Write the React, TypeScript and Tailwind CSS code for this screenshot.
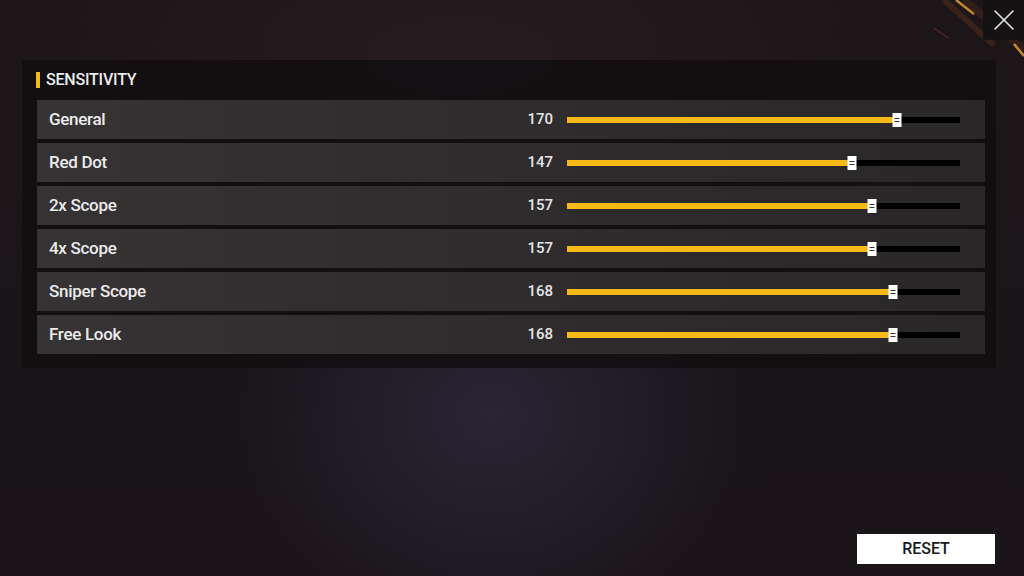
import React from "react";

type Row = { label: string; value: number };

const rows: Row[] = [
  { label: "General", value: 170 },
  { label: "Red Dot", value: 147 },
  { label: "2x Scope", value: 157 },
  { label: "4x Scope", value: 157 },
  { label: "Sniper Scope", value: 168 },
  { label: "Free Look", value: 168 },
];

const font = {
  fontFamily: '"Roboto", "Noto Sans", sans-serif',
};

const TRACK_W = 393;

function Slider({ value }: { value: number }) {
  // thumb position in px along the track
  const pos = value * 1.96 - 3;
  return (
    <div className="relative h-[6px] w-[393px] bg-black">
      <div
        className="absolute left-0 top-0 h-full bg-[#f6b915]"
        style={{ width: `${(pos / TRACK_W) * 100}%` }}
      />
      <div
        className="absolute top-1/2 flex h-[14px] w-[9px] -translate-x-1/2 -translate-y-1/2 flex-col items-center justify-center gap-[2px] bg-white"
        style={{ left: `${pos}px` }}
      >
        <span className="h-px w-[5px] bg-[#333]" />
        <span className="h-px w-[5px] bg-[#333]" />
      </div>
    </div>
  );
}

function CloseButton() {
  return (
    <div className="absolute right-0 top-0 flex h-[40px] w-[41px] items-center justify-center bg-[#141113]/90">
      <svg width="22" height="22" viewBox="0 0 22 22">
        <path d="M2 2 L20 20 M20 2 L2 20" stroke="#e8e8ea" strokeWidth="1.6" strokeLinecap="round" />
      </svg>
    </div>
  );
}

function Streaks() {
  return (
    <svg className="pointer-events-none absolute right-0 top-0" width="90" height="70" viewBox="0 0 90 70">
      <path d="M22 0 L40 14" stroke="#e0a030" strokeWidth="2.5" opacity="0.85" />
      <path d="M10 0 L60 45" stroke="#6a3a1a" strokeWidth="6" opacity="0.35" />
      <path d="M30 0 L90 50" stroke="#5a3018" strokeWidth="8" opacity="0.3" />
      <path d="M80 44 L90 56" stroke="#e0a030" strokeWidth="2.5" opacity="0.85" />
      <path d="M0 28 L14 38" stroke="#7a3a22" strokeWidth="1.5" opacity="0.5" />
    </svg>
  );
}

export default function App() {
  return (
    <div
      className="relative h-[576px] w-[1024px] overflow-hidden bg-[#1a1519] bg-[radial-gradient(ellipse_35%_55%_at_48%_72%,#2a2536_0%,transparent_70%),radial-gradient(ellipse_60%_45%_at_45%_10%,#261c1f_0%,transparent_70%),linear-gradient(180deg,#1d1619_0%,#1a1519_60%,#1b1519_100%)] text-white"
      style={font}
    >
      <Streaks />
      <CloseButton />

      <div className="flex h-full flex-col">
        <div className="ml-[22px] mt-[60px] w-[974px] bg-[#120e11]/90 pb-[14px] pl-[15px] pr-[11px]">
          <div className="flex h-[40px] items-center">
            <span className="ml-[-1px] h-[16px] w-[4px] bg-[#f6b915]" />
            <span className="ml-[6px] text-[16px] font-medium tracking-[-0.2px] text-[#ecebec]">SENSITIVITY</span>
          </div>
          <div className="flex flex-col gap-[4px]">
            {rows.map((r) => (
              <div
                key={r.label}
                className="flex h-[39px] items-center bg-[linear-gradient(90deg,#363335_0%,#2f2c2e_50%,#2a2729_100%)] pl-[12px]"
              >
                <span className="w-[458px] text-[17px] font-medium tracking-[-0.3px] text-[#ecebec]">{r.label}</span>
                <span className="w-[46px] text-right text-[15px] font-medium text-[#e6e5e6]">{r.value}</span>
                <div className="ml-[14px]">
                  <Slider value={r.value} />
                </div>
              </div>
            ))}
          </div>
        </div>

        <div className="mt-auto mb-[12px] mr-[29px] flex justify-end">
          <button className="flex h-[30px] w-[138px] items-center justify-center bg-white text-[16px] font-medium text-[#1a1a1a]">
            RESET
          </button>
        </div>
      </div>
    </div>
  );
}
